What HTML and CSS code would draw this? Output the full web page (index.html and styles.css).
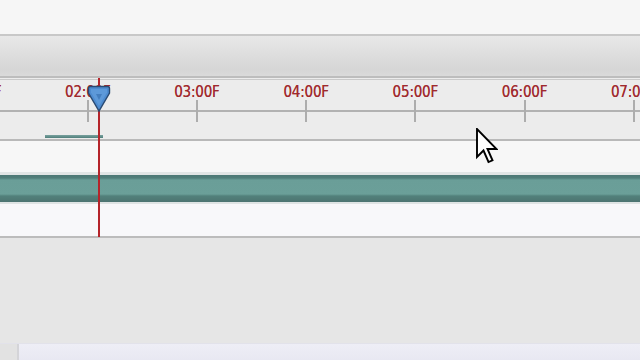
FILE: index.html
```html
<!DOCTYPE html>
<html>
<head>
<meta charset="utf-8">
<link rel="stylesheet" href="styles.css">
</head>
<body>
<div class="app">
  <div class="top"></div>
  <div class="toolbar"></div>
  <div class="sep"></div>
  <div class="ruler">
    <div class="labels">
      <span class="lbl">01:00F</span>
      <span class="lbl">02:00F</span>
      <span class="lbl">03:00F</span>
      <span class="lbl">04:00F</span>
      <span class="lbl">05:00F</span>
      <span class="lbl">06:00F</span>
      <span class="lbl">07:00F</span>
    </div>
    <div class="ticks">
      <span class="tick"></span>
      <span class="tick"></span>
      <span class="tick"></span>
      <span class="tick"></span>
      <span class="tick"></span>
      <span class="tick"></span>
      <span class="tick"></span>
    </div>
    <div class="workbar"></div>
  </div>
  <div class="track1"></div>
  <div class="clip"></div>
  <div class="track3"></div>
  <div class="empty"></div>
  <div class="scroll"><div class="sbtn"></div></div>

  <div class="playline"></div>
  <svg class="marker" width="24" height="28" viewBox="0 0 24 28">
    <path d="M1.5 3.5 Q1.5 1.5 3.5 1.5 L20.5 1.5 Q22.5 1.5 22.5 3.5 L22.5 8 L12 26 L1.5 8 Z" fill="#4d8bd0" stroke="#2a4a72" stroke-width="1.4"/>
    <path d="M4 4 L20 4 L20 7.5 L12 21 L4 7.5 Z" fill="#6ba6e0" opacity="0.55"/>
    <path d="M9 9 L15 9 L12 15 Z" fill="#3a72b2" opacity="0.7"/>
  </svg>
  <svg class="cursor" width="22" height="36" viewBox="0 0 22 36">
    <path d="M1 1 L1 29 L7.5 22.5 L12.5 34 L16.5 32.3 L11.5 21 L20.5 21 Z" fill="#ffffff" stroke="#000000" stroke-width="1.9" stroke-linejoin="miter"/>
  </svg>
</div>
</body>
</html>
```
FILE: styles.css
```css
html, body {
  margin: 0;
  padding: 0;
}
body {
  width: 640px;
  height: 360px;
  overflow: hidden;
  background: #e6e6e6;
}
.app {
  position: relative;
  width: 640px;
  height: 360px;
  display: flex;
  flex-direction: column;
  overflow: hidden;
}
.top {
  height: 34px;
  background: #f6f6f6;
}
.toolbar {
  height: 40px;
  border-top: 2px solid #c8c8c8;
  border-bottom: 2px solid #bdbdbd;
  background: linear-gradient(#e8e8e8, #dcdcdc 55%, #d6d6d6 85%, #dadada);
}
.sep {
  height: 1px;
  background: #ececec;
  border-bottom: 1px solid #cacaca;
}
.ruler {
  height: 59px;
  background: #ececec;
  border-bottom: 2px solid #b9b9b9;
  display: flex;
  flex-direction: column;
}
.labels {
  display: flex;
  margin-left: -76px;
  padding-top: 4px;
  height: 16px;
}
.lbl {
  width: 109.2px;
  flex: none;
  text-align: center;
  font-family: "DejaVu Sans Condensed", "DejaVu Sans", sans-serif;
  font-size: 15px;
  line-height: 16px;
  color: #9e2a2e;
  letter-spacing: -0.2px;
  text-shadow: 0 0 0.6px #b8474b;
}
.ticks {
  display: flex;
  margin-top: 0;
  height: 22px;
  background: linear-gradient(transparent 10px, #b2b2b2 10px, #b2b2b2 12px, transparent 12px);
  margin-left: -76px;
  width: 800px;
}
.tick {
  width: 109.2px;
  flex: none;
  display: flex;
  justify-content: center;
}
.tick::before {
  content: "";
  width: 2px;
  height: 22px;
  background: #adadad;
}
.workbar {
  margin-top: 13px;
  margin-left: 45px;
  width: 58px;
  height: 3px;
  background: linear-gradient(#7aa29f, #4f7f7b);
}
.track1 {
  height: 31px;
  background: #f7f7f7;
}
.clip {
  height: 27px;
  border-top: 3px solid #e1e5e5;
  border-bottom: 2px solid #dfe4e4;
  background: linear-gradient(#4c7875 0, #507e7a 3px, #6a9e98 5px, #6b9f99 19px, #52807b 21px, #4d7471 27px);
}
.track3 {
  height: 32px;
  background: #f8f8fa;
  border-bottom: 2px solid #bcbcbc;
}
.empty {
  flex: 1;
  background: #e6e6e6;
}
.scroll {
  height: 16px;
  border-top: 1px solid #e2e2ea;
  background: linear-gradient(#eeeef6, #e8e8f2);
  display: flex;
}
.sbtn {
  width: 17px;
  border-right: 2px solid #d4d4d8;
  background: #e2e2e2;
}
.playline {
  position: absolute;
  left: 98px;
  top: 78px;
  width: 2px;
  height: 159px;
  background: #b5242a;
}
.marker {
  position: absolute;
  left: 87px;
  top: 85px;
}
.cursor {
  position: absolute;
  left: 476px;
  top: 128px;
}
```
